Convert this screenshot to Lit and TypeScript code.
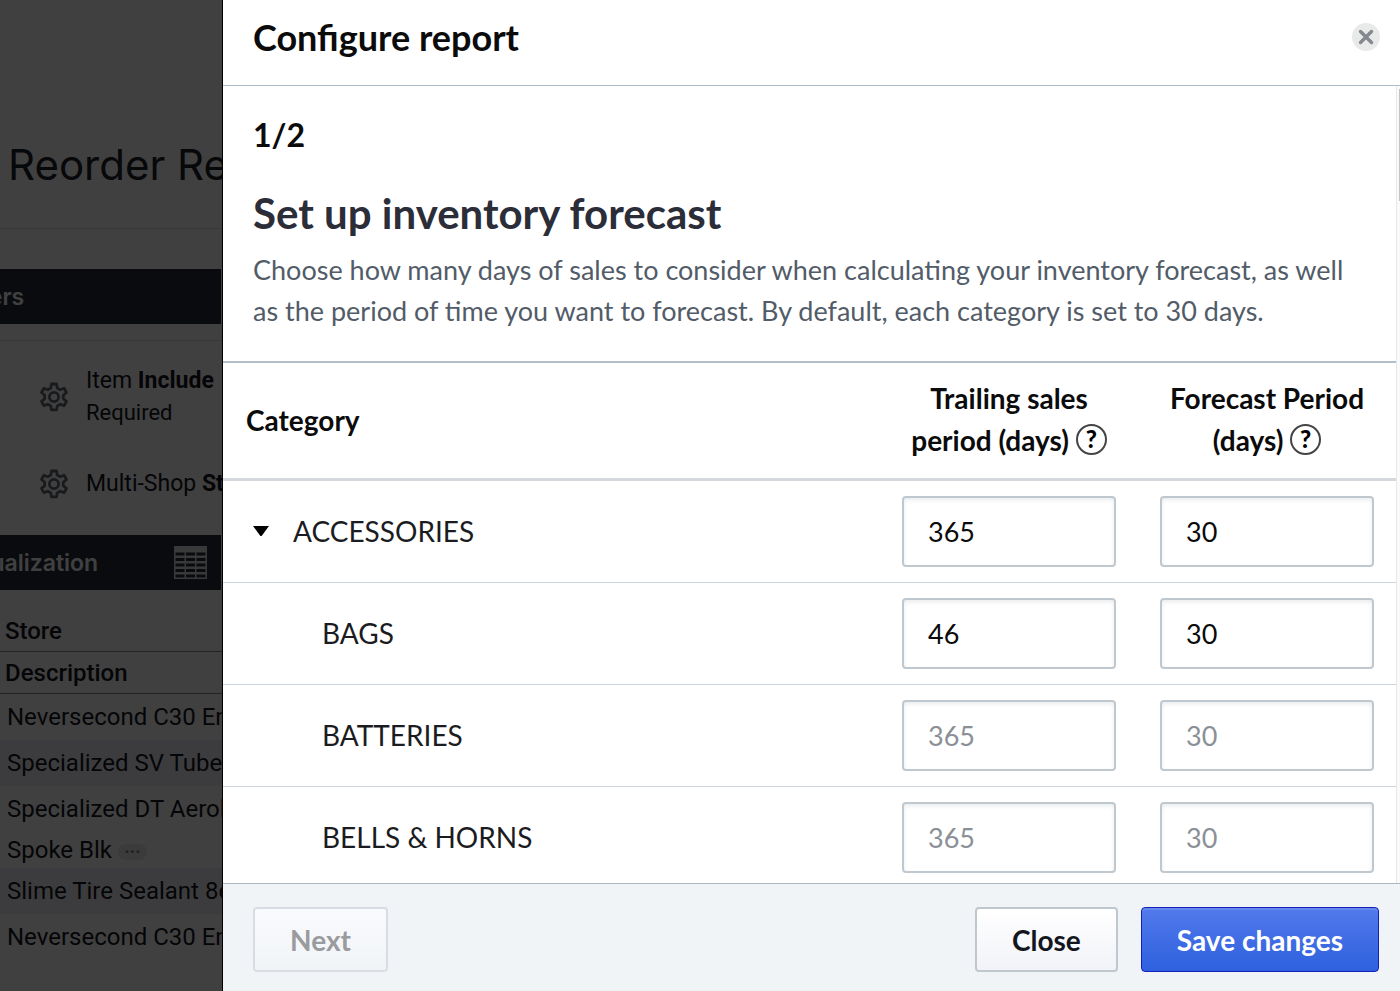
import { LitElement, html, css, svg } from "lit";
import { customElement, property, state } from "lit/decorators.js";
import { classMap } from "lit/directives/class-map.js";

interface Category {
  name: string;
  trailing: string;
  forecast: string;
  parent?: boolean;
}

interface Line {
  text: string;
  second?: string;
}

const CATEGORIES: Category[] = [
  { name: "ACCESSORIES", trailing: "365", forecast: "30", parent: true },
  { name: "BAGS", trailing: "46", forecast: "30" },
  { name: "BATTERIES", trailing: "", forecast: "" },
  { name: "BELLS & HORNS", trailing: "", forecast: "" },
];

const LINES: Line[] = [
  { text: "Neversecond C30 Energy" },
  { text: "Specialized SV Tube" },
  { text: "Specialized DT Aerolite", second: "Spoke Blk" },
  { text: "Slime Tire Sealant 8oz" },
  { text: "Neversecond C30 Energy" },
];

const gear = svg`<path d="M12.500 2h5l.7 4 3 1.700 3.900-1.400 2.400 4.200-3.200 2.700v3.500l3.200 2.700-2.400 4.200-3.900-1.400-3 1.700-.7 4h-5l-.7-4-3-1.700-3.900 1.400-2.400-4.200 3.200-2.700v-3.500l-3.200-2.700 2.400-4.200 3.900 1.400 3-1.700z" /><circle cx="15" cy="15" r="4.600" />`;

@customElement("report-page")
class ReportPage extends LitElement {
  static styles = css`
    :host {
      display: block;
      height: 100%;
      overflow: hidden;
      background: #fff;
      color: #14161c;
      font: 23px/32px Roboto, sans-serif;
      white-space: nowrap;
    }
    .title {
      margin: 0;
      padding: 137px 8px 35px;
      border-bottom: 1px solid #dcdcdc;
      font: 400 42px/56px Inter, sans-serif;
      color: #1c202a;
    }
    .bar {
      display: flex;
      align-items: center;
      width: 221px;
      height: 55px;
      box-sizing: border-box;
      padding-right: 14px;
      background: #262d3a;
      color: #fff;
      overflow: hidden;
    }
    .bar-title {
      flex: none;
      margin: 0 auto 0 -45px;
      font: 600 23px/32px Inter, sans-serif;
    }
    .filters-bar {
      margin-top: 40px;
    }
    .filters {
      margin-top: 16px;
      padding: 24px 0 35px 39px;
      border-top: 1px solid #dcdcdc;
      display: grid;
      gap: 39px;
    }
    .filter {
      display: flex;
      align-items: center;
      gap: 17px;
    }
    .gear {
      width: 30px;
      height: 30px;
      fill: none;
      stroke: #666a72;
      stroke-width: 2.8;
      stroke-linejoin: round;
    }
    .required {
      display: block;
      font-size: 22px;
    }
    .grid-icon {
      width: 33px;
      height: 33px;
    }
    .results {
      width: 100%;
      margin-top: 20px;
      border-collapse: collapse;
      text-align: left;
      font-size: 24px;
    }
    .head {
      padding: 5px 5px 4px;
      border-bottom: 1px solid #8a8a8a;
      font-weight: 500;
    }
    .cell {
      padding: 7px;
    }
    .striped {
      background: #f0f0f6;
    }
    .more {
      display: inline-block;
      width: 29px;
      padding: 0;
      border: 0;
      border-radius: 8px;
      background: #e9eaee;
      color: #777c88;
      font: 700 18px/16px Roboto, sans-serif;
    }
    .second {
      display: block;
      margin: 9px 0 -5px;
    }
  `;

  render() {
    return html`
      <h1 class="title">Reorder Report</h1>
      <div class="bar filters-bar"><h2 class="bar-title">Filters</h2></div>
      <div class="filters">
        <div class="filter">
          <svg class="gear" viewBox="0 0 30 30" aria-hidden="true">${gear}</svg>
          <span>Item <b>Include</b><span class="required">Required</span></span>
        </div>
        <div class="filter">
          <svg class="gear" viewBox="0 0 30 30" aria-hidden="true">${gear}</svg>
          <span>Multi-Shop <b>Store</b></span>
        </div>
      </div>
      <div class="bar">
        <h2 class="bar-title">Visualization</h2>
        <svg class="grid-icon" viewBox="0 0 33 33" aria-hidden="true">
          <path fill="#dfe1e4" d="M0 0h33v33H0z" />
          <path
            stroke="#262d3a"
            stroke-width="3"
            stroke-dasharray="9 1.500"
            d="M1.500 8h30M1.500 13.500h30M1.500 19h30M1.500 24.500h30M1.500 30h30"
          />
        </svg>
      </div>
      <table class="results">
        <thead>
          <tr><th class="head">Store</th></tr>
          <tr><th class="head">Description</th></tr>
        </thead>
        <tbody>
          ${LINES.map(
            (line, i) => html`<tr class=${classMap({ striped: i % 2 === 1 })}>
              <td class="cell">
                ${line.text}
                ${line.second
                  ? html`<span class="second"
                      >${line.second}
                      <button class="more" aria-label="More">···</button></span
                    >`
                  : ""}
              </td>
            </tr>`
          )}
        </tbody>
      </table>
    `;
  }
}

@customElement("help-icon")
class HelpIcon extends LitElement {
  static styles = css`
    :host {
      display: inline-block;
      vertical-align: middle;
    }
    .help {
      display: block;
      width: 31px;
      height: 31px;
      margin-bottom: 9px;
      padding: 0;
      border: 2px solid #444;
      border-radius: 50%;
      background: none;
      color: #000;
      font: 900 24px/26px Lato, sans-serif;
    }
  `;

  render() {
    return html`<button class="help" aria-label="Help">?</button>`;
  }
}

@customElement("configure-dialog")
class ConfigureDialog extends LitElement {
  @property({ attribute: false }) categories: Category[] = [];
  @state() private expanded = true;

  static styles = css`
    :host {
      display: flex;
      flex-direction: column;
      background: #fff;
      color: #0b0b0c;
      font: 28px/42px Lato, sans-serif;
    }
    .header {
      display: flex;
      justify-content: space-between;
      align-items: center;
      padding: 15px 20px 26px 30px;
      border-bottom: 1px solid #b0bcc8;
    }
    .title {
      margin: 0;
      font-size: 36px;
      line-height: 44px;
    }
    .dismiss {
      width: 28px;
      height: 28px;
      padding: 0;
      border: 0;
      border-radius: 50%;
      background: #e8eae9;
    }
    .cross {
      display: block;
      width: 28px;
      height: 28px;
      stroke: #85888c;
      stroke-width: 3.4;
      stroke-linecap: round;
    }
    .body {
      flex: 1;
      min-height: 0;
      display: flex;
    }
    .scroller {
      flex: 1;
      min-width: 0;
      overflow: auto;
      scrollbar-width: none;
    }
    .track {
      width: 4px;
      box-sizing: border-box;
      padding: 3px 0 0 2px;
      border-left: 1px solid #e8e8e8;
      background: #fafafa;
    }
    .thumb {
      height: 112px;
      background: #c4c4c4;
    }
    .intro {
      padding: 29px 30px 30px;
    }
    .step {
      margin: 0;
      font-size: 32px;
      line-height: 40px;
      font-weight: 700;
    }
    .heading {
      margin: 32px 0 10px;
      font-size: 42px;
      line-height: 52px;
      color: #2b2d38;
    }
    .text {
      margin: 0;
      font-size: 27px;
      line-height: 41px;
      color: #525c68;
    }
    .table {
      width: 100%;
      table-layout: fixed;
      border-spacing: 0;
      border-top: 2px solid #b0bfca;
    }
    .col {
      width: 258px;
    }
    .th {
      padding: 14px 10px;
      border-bottom: 3px solid #d5d9de;
    }
    .th-name {
      padding-left: 23px;
      text-align: left;
    }
    .td {
      padding: 15px 22px;
      border-bottom: 1px solid #ccd3dc;
    }
    .td-name {
      padding: 0 0 0 99px;
      border-bottom: 1px solid #ccd3dc;
      color: #1b1c22;
    }
    .td-parent {
      padding-left: 30px;
    }
    .toggle {
      display: flex;
      align-items: center;
      gap: 24px;
      padding: 0;
      border: 0;
      background: none;
      color: inherit;
      font: inherit;
    }
    .arrow {
      width: 16px;
      height: 10px;
    }
    .input {
      display: block;
      box-sizing: border-box;
      width: 100%;
      height: 71px;
      padding: 0 24px;
      border: 2px solid #c0c8cf;
      border-radius: 4px;
      background: #fff;
      box-shadow: inset 0 2px 4px #e9ebed;
      color: #0b0b0c;
      font: inherit;
      font-size: 27px;
    }
    .input::placeholder {
      color: #8b9097;
      opacity: 1;
    }
    .footer {
      display: flex;
      gap: 23px;
      padding: 23px 21px 19px 30px;
      border-top: 1px solid #adb5c0;
      background: #f0f4f7;
    }
    .button {
      box-sizing: border-box;
      height: 65px;
      padding: 0 35px;
      border: 2px solid #c0c8cf;
      border-radius: 4px;
      background: linear-gradient(#fff, #f2f3f8);
      color: #14161e;
      font: 700 28px/42px Lato, sans-serif;
    }
    .next {
      margin-right: auto;
      border-color: #d9dde3;
      background: linear-gradient(#f9fafe, #f1f4f7);
      color: #999b9e;
    }
    .save {
      border: 1px solid #1520b8;
      background: linear-gradient(#527aeb, #2e60de);
      box-shadow: inset 0 2px 0 #6488ec;
      color: #fff;
    }
  `;

  private row(c: Category) {
    return html`<tr>
      <td class=${classMap({ "td-name": true, "td-parent": !!c.parent })}>
        ${c.parent
          ? html`<button
              class="toggle"
              aria-expanded=${this.expanded}
              @click=${() => (this.expanded = !this.expanded)}
            >
              <svg class="arrow" viewBox="0 0 16 10" aria-hidden="true">
                <path d="M0 0h16L9 9.400q-1 1.200-2 0z" />
              </svg>
              ${c.name}
            </button>`
          : c.name}
      </td>
      <td class="td">
        <input
          class="input"
          aria-label="${c.name} trailing sales period in days"
          placeholder="365"
          .value=${c.trailing}
        />
      </td>
      <td class="td">
        <input
          class="input"
          aria-label="${c.name} forecast period in days"
          placeholder="30"
          .value=${c.forecast}
        />
      </td>
    </tr>`;
  }

  render() {
    const rows = this.categories.filter((c) => this.expanded || c.parent);
    return html`
      <header class="header">
        <h2 class="title">Configure report</h2>
        <button class="dismiss" aria-label="Dismiss">
          <svg class="cross" viewBox="0 0 28 28" aria-hidden="true">
            <path d="M8.500 8.500l11 11M19.500 8.500l-11 11" />
          </svg>
        </button>
      </header>
      <div class="body">
        <div class="scroller">
          <div class="intro">
            <p class="step">1/2</p>
            <h3 class="heading">Set up inventory forecast</h3>
            <p class="text">
              Choose how many days of sales to consider when calculating your
              inventory forecast, as well as the period of time you want to
              forecast. By default, each category is set to 30 days.
            </p>
          </div>
          <table class="table">
            <colgroup>
              <col />
              <col class="col" />
              <col class="col" />
            </colgroup>
            <thead>
              <tr>
                <th class="th th-name">Category</th>
                <th class="th">
                  Trailing sales period&nbsp;(days) <help-icon></help-icon>
                </th>
                <th class="th">Forecast Period (days) <help-icon></help-icon></th>
              </tr>
            </thead>
            <tbody>
              ${rows.map((c) => this.row(c))}
            </tbody>
          </table>
        </div>
        <div class="track"><div class="thumb"></div></div>
      </div>
      <footer class="footer">
        <button class="button next" disabled>Next</button>
        <button class="button">Close</button>
        <button class="button save">Save changes</button>
      </footer>
    `;
  }
}

@customElement("app-root")
class AppRoot extends LitElement {
  static styles = css`
    :host {
      display: block;
      position: relative;
      height: 100vh;
      overflow: hidden;
    }
    .scrim {
      position: absolute;
      inset: 0;
      display: flex;
      padding-left: 222px;
      background: rgba(0, 0, 0, 0.75);
    }
    .dialog {
      flex: 1;
      min-width: 0;
      border-left: 1px solid #000;
    }
  `;

  render() {
    return html`
      <report-page></report-page>
      <div class="scrim">
        <configure-dialog
          class="dialog"
          role="dialog"
          aria-label="Configure report"
          .categories=${CATEGORIES}
        ></configure-dialog>
      </div>
    `;
  }
}
